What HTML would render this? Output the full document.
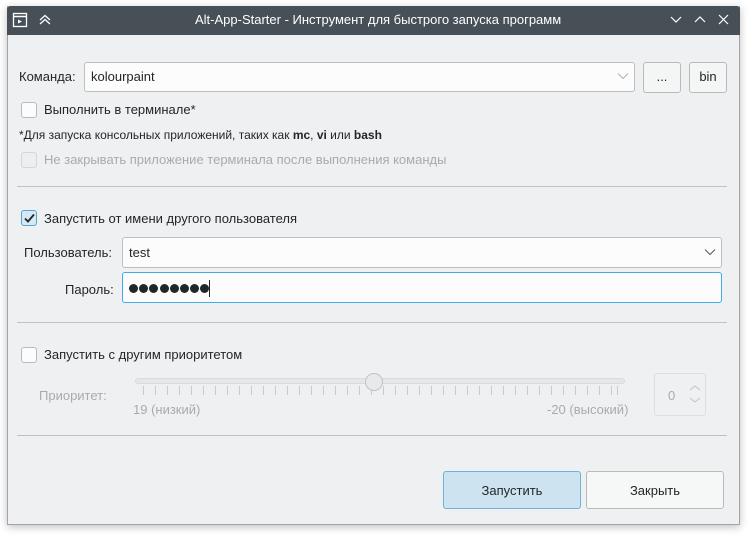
<!DOCTYPE html>
<html><head><meta charset="utf-8"><style>
*{box-sizing:border-box;margin:0;padding:0}
body{width:753px;height:539px;background:#fff;position:relative;overflow:hidden;font-family:"Liberation Sans",sans-serif;font-size:13px;color:#232629}
.a{position:absolute;white-space:nowrap}
.win{position:absolute;left:7px;top:6px;width:733px;height:519px;background:#eff0f1;border:1px solid #a0a4a8;border-top:none;box-shadow:0 2px 8px rgba(0,0,0,.25)}
.tb{position:absolute;left:7px;top:6px;width:733px;height:29px;background:#475057;border-radius:3px 3px 0 0}
.t{letter-spacing:0}
.box{position:absolute;background:#fcfcfc;border:1px solid #bcbebf;border-radius:3px}
.btn{position:absolute;background:#f4f5f5;border:1px solid #b8babc;border-radius:3px;text-align:center}
.cb{position:absolute;width:16px;height:16px;border:1px solid #b8babc;border-radius:3px;background:#fcfcfc}
.sep{position:absolute;left:17px;width:710px;height:1px;background:#bfc2c4}
.dis{color:#a8abad}
.d{display:inline-block;width:9px;height:9px;border-radius:50%;background:#232629;margin-right:1.2px}
</style></head><body>
<div class="win"></div>
<div class="tb"></div>
<svg class="a" style="left:12px;top:12px" width="40" height="18">
<rect x="1.5" y="1.5" width="13" height="13" fill="none" stroke="#fff" stroke-width="1.3"/><line x1="1.5" y1="4.5" x2="14.5" y2="4.5" stroke="#fff" stroke-width="1.5"/><path d="M6 7.5 L10 9.5 L6 11.5Z" fill="#fff"/>
<path d="M28 8 L33 3.5 L38 8 M28 12 L33 7.5 L38 12" fill="none" stroke="#fff" stroke-width="1.3"/>
</svg>
<div class="a" style="left:195px;top:12px;color:#fff;font-size:13px;letter-spacing:0">Alt-App-Starter - Инструмент для быстрого запуска программ</div>
<svg class="a" style="left:668px;top:12px" width="70" height="16">
<path d="M3 5 L8 10 L13 5" fill="none" stroke="#fff" stroke-width="1.2"/>
<path d="M27 10 L32 5 L37 10" fill="none" stroke="#fff" stroke-width="1.2"/>
<path d="M51 3 L60 12 M60 3 L51 12" fill="none" stroke="#fff" stroke-width="1.2"/>
</svg>

<div class="a t" style="left:19px;top:69px">Команда:</div>
<div class="box" style="left:84px;top:62px;width:551px;height:30px"></div>
<div class="a t" style="left:91px;top:69px">kolourpaint</div>
<svg class="a" style="left:617px;top:72px" width="12" height="8"><path d="M1 1.5 L6 6.5 L11 1.5" fill="none" stroke="#b0b3b5" stroke-width="1"/></svg>
<div class="btn" style="left:643px;top:62px;width:38px;height:31px;line-height:27px">...</div>
<div class="btn" style="left:689px;top:62px;width:38px;height:31px;line-height:28px">bin</div>

<div class="cb" style="left:21px;top:102px"></div>
<div class="a t" style="left:44px;top:102px">Выполнить в терминале*</div>
<div class="a" style="left:19px;top:128px;font-size:12px;letter-spacing:0">*Для запуска консольных приложений, таких как <b>mc</b>, <b>vi</b> или <b>bash</b></div>
<div class="cb" style="left:21px;top:152px;background:#eceeef;border-color:#d4d6d7"></div>
<div class="a t dis" style="left:44px;top:152px">Не закрывать приложение терминала после выполнения команды</div>
<div class="sep" style="top:186px"></div>

<div class="cb" style="left:21px;top:210px;background:#d6e8f3;border-color:#5aa2cf"></div>
<svg class="a" style="left:23px;top:212px" width="13" height="13"><path d="M2 6.5 L5 9.5 L11 2.5" fill="none" stroke="#232629" stroke-width="1.8"/></svg>
<div class="a t" style="left:44px;top:211px">Запустить от имени другого пользователя</div>
<div class="a t" style="left:24px;top:245px">Пользователь:</div>
<div class="box" style="left:122px;top:237px;width:600px;height:31px"></div>
<div class="a t" style="left:129px;top:245px">test</div>
<svg class="a" style="left:704px;top:248px" width="12" height="8"><path d="M1 1.5 L6 6.5 L11 1.5" fill="none" stroke="#555" stroke-width="1"/></svg>
<div class="a t" style="left:65px;top:282px">Пароль:</div>
<div class="box" style="left:122px;top:272px;width:600px;height:31px;border-color:#3daee9"></div>
<div class="a" style="left:129px;top:284px;line-height:0"><span class="d"></span><span class="d"></span><span class="d"></span><span class="d"></span><span class="d"></span><span class="d"></span><span class="d"></span><span class="d"></span></div>
<div class="a" style="left:209px;top:280px;width:1px;height:17px;background:#232629"></div>
<div class="sep" style="top:322px"></div>

<div class="cb" style="left:21px;top:347px"></div>
<div class="a t" style="left:44px;top:347px">Запустить с другим приоритетом</div>
<div class="a t dis" style="left:39px;top:388px">Приоритет:</div>
<div class="a" style="left:135px;top:378px;width:490px;height:6px;background:#e4e6e7;border:1px solid #d8dadb;border-radius:3px"></div>
<svg class="a" style="left:130px;top:384px" width="500" height="14">
<g stroke="#c8cacc" stroke-width="1">
<path d="M13.5 2v9M25.5 2v9M37.5 2v9M49.5 2v9M61.5 2v9M73.5 2v9M85.5 2v9M97.5 2v9M109.5 2v9M121.5 2v9M133.5 2v9M145.5 2v9M157.5 2v9M169.5 2v9M181.5 2v9M193.5 2v9M205.5 2v9M217.5 2v9M229.5 2v9M241.5 2v9M253.5 2v9M265.5 2v9M277.5 2v9M289.5 2v9M301.5 2v9M313.5 2v9M325.5 2v9M337.5 2v9M349.5 2v9M361.5 2v9M373.5 2v9M385.5 2v9M397.5 2v9M409.5 2v9M421.5 2v9M433.5 2v9M445.5 2v9M457.5 2v9M469.5 2v9M481.5 2v9M487.5 2v9"/></g></svg>
<div class="a" style="left:365px;top:373px;width:18px;height:18px;border-radius:50%;background:#e8e9ea;border:1px solid #c0c2c4"></div>
<div class="a t dis" style="left:133px;top:402px">19 (низкий)</div>
<div class="a t dis" style="left:547px;top:402px">-20 (высокий)</div>
<div class="a" style="left:654px;top:373px;width:52px;height:43px;border:1px solid #dcdedf;border-radius:3px"></div>
<div class="a dis" style="left:668px;top:388px">0</div>
<svg class="a" style="left:688px;top:384px" width="14" height="22"><path d="M2 6 L7 2 L12 6 M2 14 L7 18 L12 14" fill="none" stroke="#c0c2c4" stroke-width="1"/></svg>
<div class="sep" style="top:435px"></div>

<div class="btn t" style="left:443px;top:471px;width:138px;height:38px;line-height:37px;background:#cde4f0;border-color:#6fb3dc">Запустить</div>
<div class="btn t" style="left:586px;top:471px;width:138px;height:38px;line-height:37px;background:#f6f7f7">Закрыть</div>
</body></html>
